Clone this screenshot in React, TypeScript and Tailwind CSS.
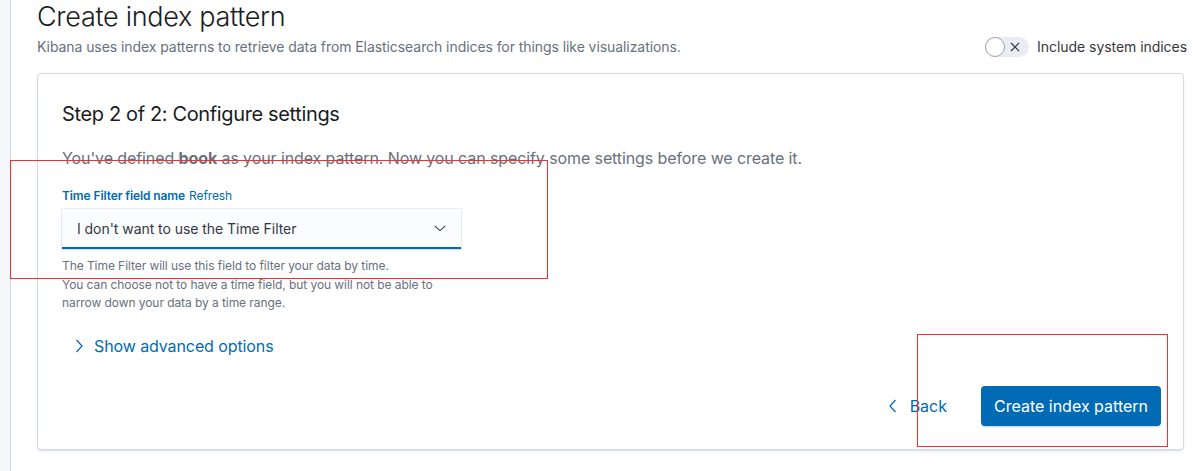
import React from "react";

export default function App() {
  return (
    <div
      className="relative flex h-[471px] w-[1193px] overflow-hidden bg-white text-[#343741]"
      style={{ fontFamily: "Inter, 'Noto Sans', sans-serif" }}
    >
      <div className="h-full w-[11px] shrink-0 border-r border-[#d3dae6] bg-[#f5f7fa]" />
      <div className="flex-1 pl-[26px] pr-[9px]">
        <h1 className="mt-[-1px] text-[27px] font-light leading-[35px] tracking-[-0.3px] text-[#1a1c21]">
          Create index pattern
        </h1>
        <div className="mt-[3px] flex items-center justify-between">
          <p className="text-[14px] leading-[20px] tracking-[-0.07px] text-[#69707d]">
            Kibana uses index patterns to retrieve data from Elasticsearch indices for things like visualizations.
          </p>
          <div className="mr-[-3px] flex items-center gap-[8px]">
            <div className="relative h-[20px] w-[44px] rounded-full bg-[#e9edf3]">
              <div className="absolute left-0 top-0 h-[20px] w-[20px] rounded-full border border-[#98a2b3] bg-white" />
              <svg className="absolute left-[25px] top-[5px]" width="10" height="10" viewBox="0 0 10 10">
                <path d="M1 1 L9 9 M9 1 L1 9" stroke="#343741" strokeWidth="1.2" fill="none" />
              </svg>
            </div>
            <span className="text-[14px] leading-[20px] tracking-[-0.05px] text-[#343741]">Include system indices</span>
          </div>
        </div>
        <div className="mt-[16px] h-[377px] rounded-[4px] border border-[#d3dae6] bg-white px-[24px] pt-[24px] shadow-[0_2px_2px_-1px_rgba(152,162,179,0.3),0_1px_5px_-2px_rgba(152,162,179,0.3)]">
          <h2 className="text-[20px] font-normal leading-[32px] tracking-[-0.36px] text-[#1a1c21]">
            Step 2 of 2: Configure settings
          </h2>
          <p className="mt-[16px] text-[16px] leading-[24px] tracking-[-0.1px] text-[#69707d]">
            You've defined <strong className="font-bold text-[#69707d]">book</strong> as your index pattern. Now you can specify some settings before we create it.
          </p>
          <div className="mt-[17px] flex items-center gap-[4px] text-[12px] leading-[18px] tracking-[-0.1px]">
            <span className="font-semibold text-[#006bb4]">Time Filter field name</span>
            <span className="text-[#006bb4]">Refresh</span>
          </div>
          <div className="mt-[4px] flex h-[40px] w-[399px] items-center justify-between border-b-2 border-[#006bb4] bg-[#fbfcfd] pl-[15px] pr-[14px] shadow-[0_1px_2px_rgba(152,162,179,0.25),0_0_0_1px_rgba(15,39,118,0.08)]">
            <span className="text-[14px] tracking-[-0.05px] text-[#343741]">I don't want to use the Time Filter</span>
            <svg width="14" height="14" viewBox="0 0 16 16">
              <path d="M2 5.5 L8 11 L14 5.5" stroke="#343741" strokeWidth="1.2" fill="none" />
            </svg>
          </div>
          <div className="mt-[8px] text-[12px] leading-[18.5px] tracking-[-0.07px] text-[#69707d]">
            <p>The Time Filter will use this field to filter your data by time.</p>
            <p>You can choose not to have a time field, but you will not be able to</p>
            <p>narrow down your data by a time range.</p>
          </div>
          <div className="mt-[21px] flex items-center gap-[7px] pl-[9px]">
            <svg width="16" height="16" viewBox="0 0 16 16">
              <path d="M5.5 2 L11 8 L5.5 14" stroke="#006bb4" strokeWidth="1.2" fill="none" />
            </svg>
            <span className="text-[16px] leading-[24px] tracking-[-0.1px] text-[#006bb4]">Show advanced options</span>
          </div>
          <div className="mt-[28px] mr-[-2px] flex items-center justify-end gap-[34px]">
            <div className="flex items-center gap-[9px]">
              <svg width="16" height="16" viewBox="0 0 16 16">
                <path d="M10.5 2 L5 8 L10.5 14" stroke="#006bb4" strokeWidth="1.2" fill="none" />
              </svg>
              <span className="text-[16px] leading-[24px] text-[#006bb4]">Back</span>
            </div>
            <button className="h-[40px] w-[180px] rounded-[4px] bg-[#006bb4] text-[16px] text-white shadow-[0_2px_2px_-1px_rgba(54,97,126,0.3)]">
              Create index pattern
            </button>
          </div>
        </div>
      </div>
      <div className="pointer-events-none absolute left-[10px] top-[160px] h-[119px] w-[538px] border border-[#ff2a2a]" />
      <div className="pointer-events-none absolute left-[917px] top-[334px] h-[113px] w-[251px] border border-[#ff2a2a]" />
    </div>
  );
}
